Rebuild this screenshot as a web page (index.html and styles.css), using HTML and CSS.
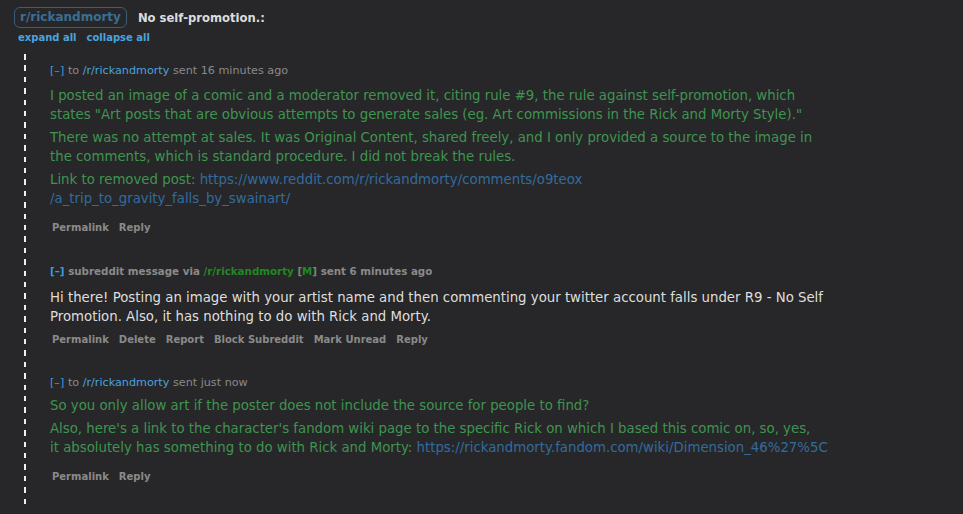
FILE: index.html
```html
<!DOCTYPE html>
<html>
<head>
<meta charset="utf-8">
<link rel="stylesheet" href="styles.css">
</head>
<body>
<div class="header">
  <a class="badge">r/rickandmorty</a>
  <span class="title">No self-promotion.:</span>
</div>
<div class="toggles">
  <a>expand all</a>
  <a>collapse all</a>
</div>
<div class="thread">
  <div class="msg">
    <div class="meta"><span class="expand">[–]</span> to <a class="sub">/r/rickandmorty</a> sent 16 minutes ago</div>
    <div class="body green">
      <p>I posted an image of a comic and a moderator removed it, citing rule #9, the rule against self-promotion, which states "Art posts that are obvious attempts to generate sales (eg. Art commissions in the Rick and Morty Style)."</p>
      <p>There was no attempt at sales. It was Original Content, shared freely, and I only provided a source to the image in the comments, which is standard procedure. I did not break the rules.</p>
      <p>Link to removed post: <a class="url">https://www.reddit.com/r/rickandmorty/comments/o9teox<br>/a_trip_to_gravity_falls_by_swainart/</a></p>
    </div>
    <div class="actions"><a>Permalink</a><a>Reply</a></div>
  </div>
  <div class="msg">
    <div class="meta bold"><span class="expand">[–]</span> subreddit message via <a class="modsub">/r/rickandmorty</a> <span class="mtag">[<span class="m">M</span>]</span> sent 6 minutes ago</div>
    <div class="body light">
      <p>Hi there! Posting an image with your artist name and then commenting your twitter account falls under R9 - No Self Promotion. Also, it has nothing to do with Rick and Morty.</p>
    </div>
    <div class="actions"><a>Permalink</a><a>Delete</a><a>Report</a><a>Block Subreddit</a><a>Mark Unread</a><a>Reply</a></div>
  </div>
  <div class="msg">
    <div class="meta"><span class="expand">[–]</span> to <a class="sub">/r/rickandmorty</a> sent just now</div>
    <div class="body green">
      <p>So you only allow art if the poster does not include the source for people to find?</p>
      <p>Also, here's a link to the character's fandom wiki page to the specific Rick on which I based this comic on, so, yes,<br><span class="tight">it absolutely has something to do with Rick and Morty: <a class="url">https://rickandmorty.fandom.com/wiki/Dimension_46%27%5C</a></span></p>
    </div>
    <div class="actions"><a>Permalink</a><a>Reply</a></div>
  </div>
</div>
</body>
</html>
```
FILE: styles.css
```css
html, body {
  margin: 0;
  background: #272729;
  height: 100%;
  overflow: hidden;
}
body {
  font-family: "DejaVu Sans", Verdana, sans-serif;
  color: #d7dadc;
}
.header {
  display: flex;
  align-items: center;
  gap: 11px;
  padding: 7px 0 0 14px;
}
.badge {
  border: 1px solid #3a5d7a;
  border-radius: 6px;
  padding: 2px 5px;
  line-height: 15px;
  color: #3b6e93;
  font-weight: bold;
  font-size: 12px;
}
.title {
  color: #dcdcdc;
  font-weight: bold;
  font-size: 11.6px;
}
.toggles {
  display: flex;
  gap: 10px;
  margin: 4px 0 0 18px;
  font-size: 10px;
  line-height: 12px;
  font-weight: bold;
  color: #4aa3df;
}
.thread {
  margin: 10px 0 0 24px;
  padding: 10px 0 23px 24px;
  width: 778px;
  background: repeating-linear-gradient(to bottom, #f0f0f0 0, #f0f0f0 5.5px, transparent 5.5px, transparent 11.4px) left top / 2px 100% no-repeat;
}
.msg {
  padding: 0 0 30px 2px;
}
.msg:last-child { padding-bottom: 0; }
.meta {
  font-size: 11.2px;
  line-height: 14px;
  color: #8a8a8a;
}
.meta.bold { font-size: 10.3px; font-weight: bold; }
.expand { color: #369bdf; }
.sub { color: #4aa3df; }
.modsub { color: #228822; }
.mtag { color: #6d8f6d; }
.m { color: #228822; }
.body {
  font-size: 13.3px;
  line-height: 19px;
  margin-top: 8px;
}
.body p { margin: 0 0 4px; }
.msg:last-child .body { margin-top: 6px; }
.light { color: #dedede; margin-top: 10px; }
.green { color: #3f9450; }
.url { color: #336b9e; }
.tight {
  white-space: nowrap;
}
.actions {
  display: flex;
  gap: 10px;
  margin: 14px 0 0 2px;
  font-size: 10px;
  line-height: 12px;
  font-weight: bold;
  color: #8a8a8a;
}
.light + .actions { margin-top: 8px; }
```
